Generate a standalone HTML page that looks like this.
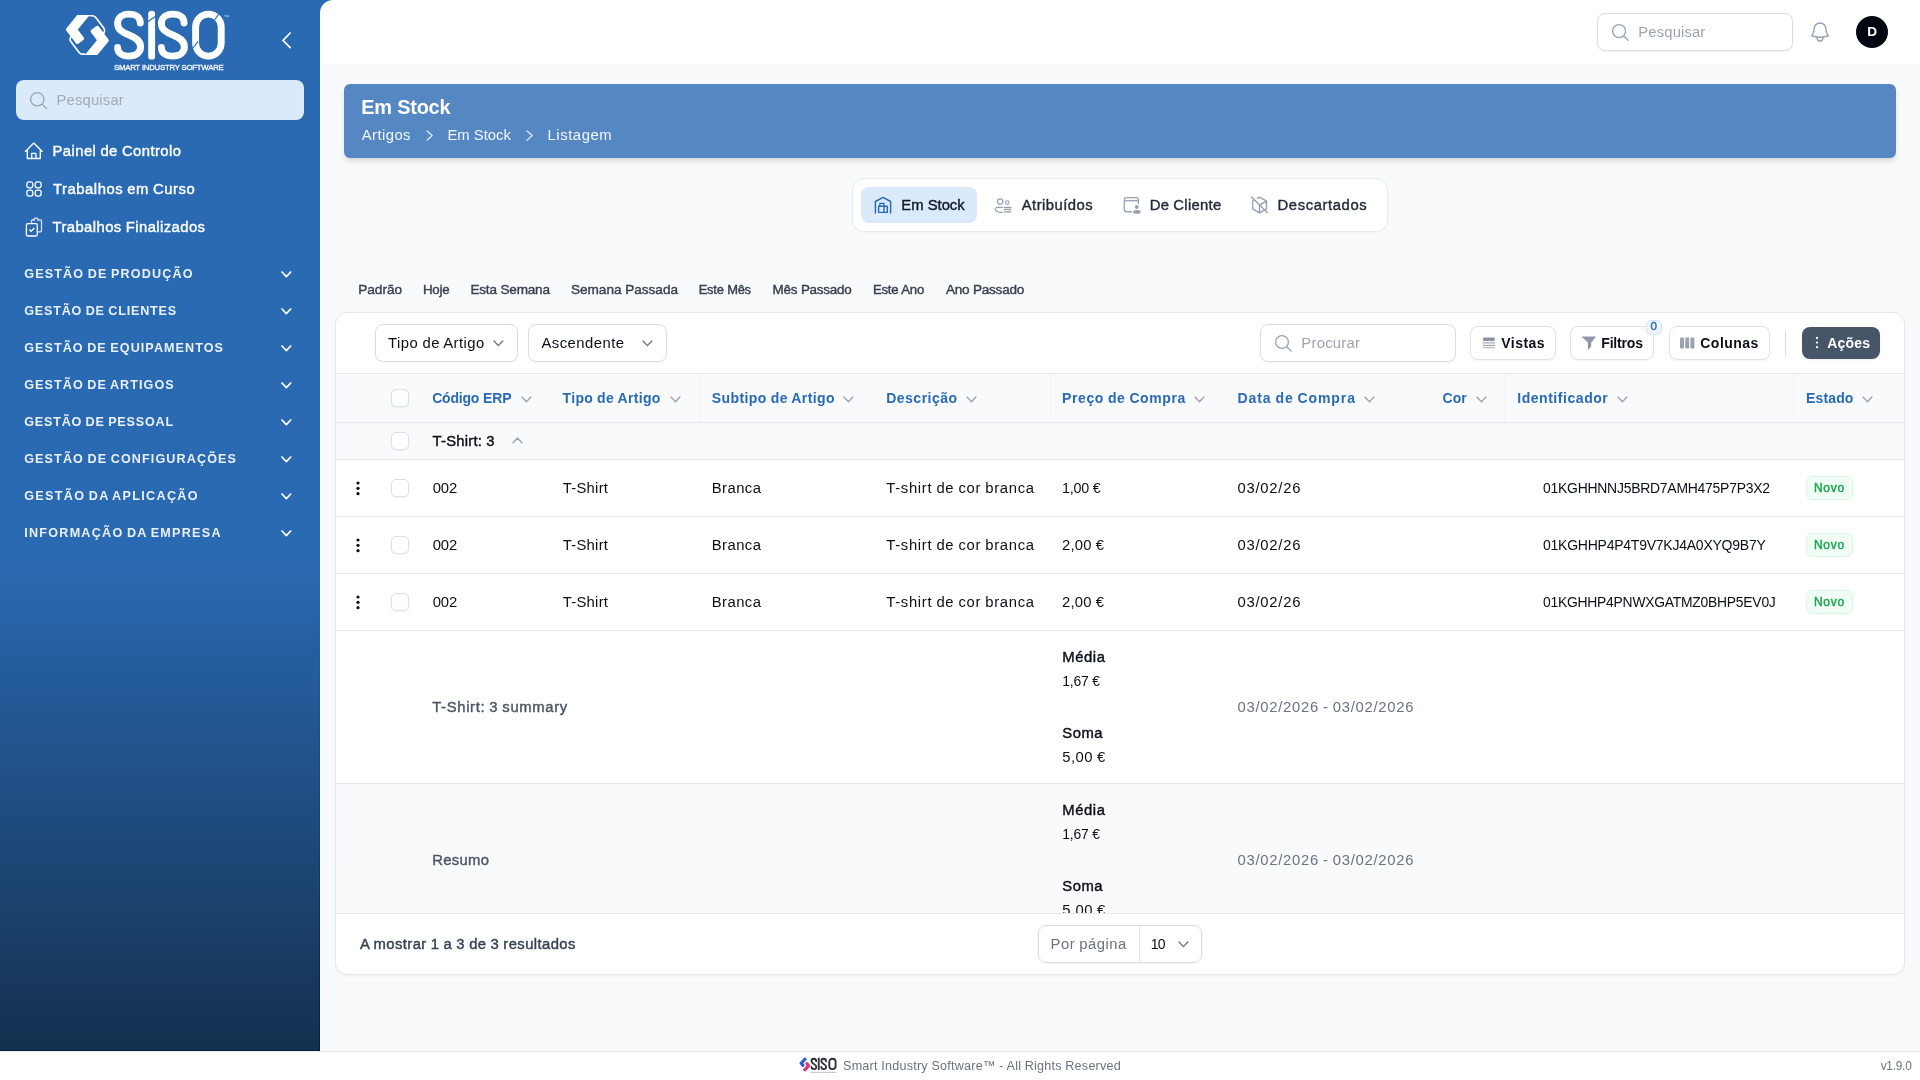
<!DOCTYPE html>
<html lang="pt"><head><meta charset="utf-8"><title>Em Stock - SISO</title>
<style>
*{box-sizing:border-box;margin:0;padding:0}
html,body{width:1920px;height:1080px;overflow:hidden;background:#f9fafb;font-family:"Liberation Sans", sans-serif;}
div,svg,span,a,h1,p,label,button,li,ul,nav,aside,header,main,footer,section{position:absolute;display:block;}
aside,header,main,footer,section,nav,ul,li{position:static;list-style:none}
.t{white-space:pre;}
svg{overflow:visible}
.field{background:#fff;border:1px solid #d9dce1;border-radius:8px;box-shadow:0 1px 2px rgba(0,0,0,.04)}
.btn{background:#fff;border:1px solid #dfe1e5;border-radius:8px;box-shadow:0 1px 2px rgba(0,0,0,.05)}
.cb{background:#fff;border:1px solid #dcdfe4;border-radius:5px;box-shadow:0 1px 2px rgba(0,0,0,.05)}
.hl{background:#e5e7eb;height:1px}
</style></head>
<body><div id="app" style="left:0;top:0;width:1920px;height:1080px;will-change:transform">
<aside>
<div style="left:0px;top:0px;width:336px;height:1051px;background:linear-gradient(180deg,#2a6ab3 0%,#2a6ab3 53%,#14304f 100%);border-bottom:1px solid #0a2247"></div>
<div style="left:320px;top:64px;width:16px;height:987px;background:#f9fafb"></div>
<div style="left:319px;top:0px;width:1px;height:1051px;background:linear-gradient(180deg,rgba(0,20,60,0) 55%,rgba(0,25,70,.18) 78%,rgba(0,15,50,.6) 100%)"></div>
<svg style="left:0;top:0" width="320" height="80" viewBox="0 0 320 80" fill="none">
<defs><clipPath id="lc"><rect x="60" y="14.9" width="60" height="40" rx="2"/></clipPath></defs>
<g clip-path="url(#lc)" fill="#fff" stroke="#fff" stroke-width="4" stroke-linejoin="round">
<path d="M87.20 5.99 L67.97 29.43 L77.48 41.97 L82.02 38.53 L75.23 29.57 L91.60 9.61Z"/>
<path d="M87.50 63.81 L106.73 40.37 L97.22 27.83 L92.68 31.27 L99.47 40.23 L83.10 60.19Z"/>
</g>
<path d="M90 15.75 H92.5 Q94.3 15.75 95.4 17.1 L103.9 28.2 Q105.3 30.2 104.2 32.2 L103.6 33.2" stroke="#fff" stroke-width="1.7" stroke-linecap="round" stroke-linejoin="round"/>
<path d="M84.7 54.05 H82.2 Q80.4 54.05 79.3 52.7 L70.8 41.6 Q69.4 39.6 70.5 37.6 L71.1 36.6" stroke="#fff" stroke-width="1.7" stroke-linecap="round" stroke-linejoin="round"/>
<g stroke="#fff" stroke-width="6.9" stroke-linecap="round" stroke-linejoin="round">
<path d="M140.3 23 C140.3 17.4 136 14.1 129 14.1 C122 14.1 117.6 17.8 117.6 23.4 C117.6 29.2 121.5 32 129 35 C136.5 38 140.6 41 140.6 46.8 C140.6 52.4 136 56.1 129 56.1 C122 56.1 117.6 52.8 117.6 47.4"/>
<path d="M184.1 23 C184.1 17.4 179.8 14.1 172.8 14.1 C165.8 14.1 161.4 17.8 161.4 23.4 C161.4 29.2 165.3 32 172.8 35 C180.3 38 184.4 41 184.4 46.8 C184.4 52.4 179.8 56.1 172.8 56.1 C165.8 56.1 161.4 52.8 161.4 47.4"/>
<rect x="195.6" y="14.1" width="25.6" height="42" rx="12.8"/>
</g>
<rect x="148.2" y="10.8" width="6.9" height="48.8" rx="3.2" fill="#fff"/>
<path d="M146.5 22.5 L156.5 15.8" stroke="#2a6ab3" stroke-width="1.3"/>
<path d="M214.6 20 L220 12.4 M192.6 48.5 L198.2 41.4" stroke="#2a6ab3" stroke-width="1.1"/>
<path d="M224.4 15.4 h1.7 M225.25 15.4 v1.8 M226.9 17.2 v-1.8 l0.8 1.1 l0.8 -1.1 v1.8" stroke="#fff" stroke-opacity=".85" stroke-width=".45"/>
</svg>
<span class="t" style="left:114px;top:62px;font-size:7.79px;line-height:11px;letter-spacing:-0.244px;color:rgba(255,255,255,.95);word-spacing:0.244px;-webkit-text-stroke:0.3px rgba(255,255,255,.95);">SMART INDUSTRY SOFTWARE</span>
<svg style="left:280.5px;top:30.7px;" width="11.2" height="18.6" viewBox="0 0 11.2 18.6" fill="none"><path d="M9.2 2 L2 9.3 L9.2 16.6" stroke="#fff" stroke-width="1.7" stroke-linecap="round" stroke-linejoin="round"/></svg>
<div style="left:16px;top:80px;width:288px;height:40px;background:#dbeafb;border-radius:8px"></div>
<svg style="left:27.5px;top:89.7px;" width="21.3" height="21.3" viewBox="0 0 24 24" fill="none"><path d="m21 21-5.197-5.197m0 0A7.5 7.5 0 1 0 5.196 5.196a7.5 7.5 0 0 0 10.607 10.607Z" stroke="#9ca3af" stroke-width="1.45" stroke-linecap="round" stroke-linejoin="round"/></svg>
<span class="t" style="left:56.5px;top:91px;font-size:14.84px;line-height:18px;letter-spacing:0.164px;color:#a3a9b5;">Pesquisar</span>
<nav><ul>
<li>
<svg style="left:24px;top:141px;" width="20" height="20" viewBox="0 0 20 20" fill="none"><path d="M1.4 10.4 L9.8 2 L18.2 10.4 M3.3 8.9 V17.5 H16.3 V8.9 M7.7 17.5 V12.3 H11.9 V17.5" stroke="#fff" stroke-width="1.35" stroke-linecap="round" stroke-linejoin="round"/></svg>
<a class="t" style="left:52.5px;top:142px;font-size:14.84px;line-height:18px;letter-spacing:0.433px;color:#fff;word-spacing:-0.433px;-webkit-text-stroke:0.4px #fff;">Painel de Controlo</a>
</li><li>
<svg style="left:26px;top:181px;" width="16" height="16" viewBox="0 0 16 16" fill="none"><rect x="0.9" y="0.9" width="5.9" height="5.9" rx="2.1" stroke="#fff" stroke-width="1.3"/><rect x="0.9" y="9.2" width="5.9" height="5.9" rx="2.1" stroke="#fff" stroke-width="1.3"/><rect x="9.2" y="0.9" width="5.9" height="5.9" rx="2.1" stroke="#fff" stroke-width="1.3"/><rect x="9.2" y="9.2" width="5.9" height="5.9" rx="2.1" stroke="#fff" stroke-width="1.3"/></svg>
<a class="t" style="left:53px;top:180px;font-size:14.84px;line-height:18px;letter-spacing:0.531px;color:#fff;word-spacing:-0.531px;-webkit-text-stroke:0.4px #fff;">Trabalhos em Curso</a>
</li><li>
<svg style="left:25px;top:217px;" width="18" height="20" viewBox="0 0 18 20" fill="none"><path d="M6.5 6.3 V4.2 Q6.5 2.9 7.8 2.9 H9.2 M13 2.9 H15.2 Q16.5 2.9 16.5 4.2 V13.6 Q16.5 14.9 15.2 14.9 H12.6 M9.2 3.6 V2.2 Q9.2 1.2 10.2 1.2 H12 Q13 1.2 13 2.2 V3.6" stroke="#fff" stroke-opacity=".85" stroke-width="1.2" stroke-linecap="round"/><rect x="1.4" y="6.6" width="10.9" height="12.4" rx="1.6" stroke="#fff" stroke-width="1.3"/><path d="M4.6 12.9 L6.1 14.4 L9 11.3" stroke="#fff" stroke-width="1.3" stroke-linecap="round" stroke-linejoin="round"/></svg>
<a class="t" style="left:52.5px;top:218px;font-size:14.84px;line-height:18px;letter-spacing:0.42px;color:#fff;word-spacing:-0.42px;-webkit-text-stroke:0.4px #fff;">Trabalhos Finalizados</a>
</li>
<li>
<span class="t" style="left:24.2px;top:266px;font-size:12.6px;line-height:16px;letter-spacing:1.144px;color:rgba(255,255,255,.9);word-spacing:-1.144px;font-weight:700;">GESTÃO DE PRODUÇÃO</span>
<svg style="left:279.55px;top:269.65px;" width="12.7" height="8.6" viewBox="0 0 12.7 8.6" fill="none"><path d="M2 2 L6.35 6.6 L10.7 2" stroke="#fff" stroke-width="1.7" stroke-linecap="round" stroke-linejoin="round"/></svg>
</li>
<li>
<span class="t" style="left:24.2px;top:303px;font-size:12.6px;line-height:16px;letter-spacing:0.803px;color:rgba(255,255,255,.9);word-spacing:-0.803px;font-weight:700;">GESTÃO DE CLIENTES</span>
<svg style="left:279.55px;top:306.65px;" width="12.7" height="8.6" viewBox="0 0 12.7 8.6" fill="none"><path d="M2 2 L6.35 6.6 L10.7 2" stroke="#fff" stroke-width="1.7" stroke-linecap="round" stroke-linejoin="round"/></svg>
</li>
<li>
<span class="t" style="left:24.2px;top:340px;font-size:12.6px;line-height:16px;letter-spacing:1.059px;color:rgba(255,255,255,.9);word-spacing:-1.059px;font-weight:700;">GESTÃO DE EQUIPAMENTOS</span>
<svg style="left:279.55px;top:343.65px;" width="12.7" height="8.6" viewBox="0 0 12.7 8.6" fill="none"><path d="M2 2 L6.35 6.6 L10.7 2" stroke="#fff" stroke-width="1.7" stroke-linecap="round" stroke-linejoin="round"/></svg>
</li>
<li>
<span class="t" style="left:24.2px;top:377px;font-size:12.6px;line-height:16px;letter-spacing:1.066px;color:rgba(255,255,255,.9);word-spacing:-1.066px;font-weight:700;">GESTÃO DE ARTIGOS</span>
<svg style="left:279.55px;top:380.65px;" width="12.7" height="8.6" viewBox="0 0 12.7 8.6" fill="none"><path d="M2 2 L6.35 6.6 L10.7 2" stroke="#fff" stroke-width="1.7" stroke-linecap="round" stroke-linejoin="round"/></svg>
</li>
<li>
<span class="t" style="left:24.2px;top:414px;font-size:12.6px;line-height:16px;letter-spacing:0.789px;color:rgba(255,255,255,.9);word-spacing:-0.789px;font-weight:700;">GESTÃO DE PESSOAL</span>
<svg style="left:279.55px;top:417.65px;" width="12.7" height="8.6" viewBox="0 0 12.7 8.6" fill="none"><path d="M2 2 L6.35 6.6 L10.7 2" stroke="#fff" stroke-width="1.7" stroke-linecap="round" stroke-linejoin="round"/></svg>
</li>
<li>
<span class="t" style="left:24.2px;top:451px;font-size:12.6px;line-height:16px;letter-spacing:1.109px;color:rgba(255,255,255,.9);word-spacing:-1.109px;font-weight:700;">GESTÃO DE CONFIGURAÇÕES</span>
<svg style="left:279.55px;top:454.65px;" width="12.7" height="8.6" viewBox="0 0 12.7 8.6" fill="none"><path d="M2 2 L6.35 6.6 L10.7 2" stroke="#fff" stroke-width="1.7" stroke-linecap="round" stroke-linejoin="round"/></svg>
</li>
<li>
<span class="t" style="left:24.2px;top:488px;font-size:12.6px;line-height:16px;letter-spacing:1.313px;color:rgba(255,255,255,.9);word-spacing:-1.313px;font-weight:700;">GESTÃO DA APLICAÇÃO</span>
<svg style="left:279.55px;top:491.65px;" width="12.7" height="8.6" viewBox="0 0 12.7 8.6" fill="none"><path d="M2 2 L6.35 6.6 L10.7 2" stroke="#fff" stroke-width="1.7" stroke-linecap="round" stroke-linejoin="round"/></svg>
</li>
<li>
<span class="t" style="left:24.2px;top:525px;font-size:12.6px;line-height:16px;letter-spacing:1.253px;color:rgba(255,255,255,.9);word-spacing:-1.253px;font-weight:700;">INFORMAÇÃO DA EMPRESA</span>
<svg style="left:279.55px;top:528.65px;" width="12.7" height="8.6" viewBox="0 0 12.7 8.6" fill="none"><path d="M2 2 L6.35 6.6 L10.7 2" stroke="#fff" stroke-width="1.7" stroke-linecap="round" stroke-linejoin="round"/></svg>
</li>
</ul></nav></aside>
<header>
<div style="left:320px;top:0px;width:1600px;height:64px;background:#fff;border-top-left-radius:13px"></div>
<div class="field" style="left:1597px;top:13px;width:196px;height:38px;"></div>
<svg style="left:1609.8px;top:22.2px;" width="20.8" height="20.8" viewBox="0 0 24 24" fill="none"><path d="m21 21-5.197-5.197m0 0A7.5 7.5 0 1 0 5.196 5.196a7.5 7.5 0 0 0 10.607 10.607Z" stroke="#94a3b8" stroke-width="1.5" stroke-linecap="round" stroke-linejoin="round"/></svg>
<span class="t" style="left:1638.3px;top:23px;font-size:14.84px;line-height:18px;letter-spacing:0.133px;color:#9ca3b4;">Pesquisar</span>
<svg style="left:1807.8px;top:19.6px;" width="24" height="24" viewBox="0 0 24 24" fill="none"><path d="M14.857 17.082a23.848 23.848 0 0 0 5.454-1.31A8.967 8.967 0 0 1 18 9.75V9A6 6 0 0 0 6 9v.75a8.967 8.967 0 0 1-2.312 6.022c1.733.64 3.56 1.085 5.455 1.31m5.714 0a24.255 24.255 0 0 1-5.714 0m5.714 0a3 3 0 1 1-5.714 0" stroke="#94a3b8" stroke-width="1.45" stroke-linecap="round" stroke-linejoin="round"/></svg>
<div style="left:1856px;top:16px;width:32px;height:32px;background:#030712;border-radius:50%"></div>
<span class="t" style="left:1867.3px;top:23px;font-size:13.6px;line-height:17px;letter-spacing:0px;color:#fff;font-weight:700;">D</span>
</header>
<main>
<div style="left:344px;top:84px;width:1552px;height:73.6px;background:#5588c3;border-radius:6px;box-shadow:0 4px 6px -1px rgba(0,0,0,.12),0 2px 4px -2px rgba(0,0,0,.1)"></div>
<h1 class="t" style="left:361.3px;top:95px;font-size:19.9px;line-height:24px;letter-spacing:-0.243px;color:#fff;word-spacing:0.243px;font-weight:700;">Em Stock</h1>
<span class="t" style="left:361.7px;top:126px;font-size:14.84px;line-height:18px;letter-spacing:0.441px;color:rgba(255,255,255,.92);">Artigos</span>
<svg style="left:425.4px;top:128.6px;" width="9.2" height="13.2" viewBox="0 0 9.2 13.2" fill="none"><path d="M2 2 L7.2 6.6 L2 11.2" stroke="#fff" stroke-opacity="0.8" stroke-width="1.3" stroke-linecap="round" stroke-linejoin="round"/></svg>
<span class="t" style="left:447.5px;top:126px;font-size:14.84px;line-height:18px;letter-spacing:-0.026px;color:rgba(255,255,255,.92);word-spacing:0.026px;">Em Stock</span>
<svg style="left:525.4px;top:128.6px;" width="9.2" height="13.2" viewBox="0 0 9.2 13.2" fill="none"><path d="M2 2 L7.2 6.6 L2 11.2" stroke="#fff" stroke-opacity="0.8" stroke-width="1.3" stroke-linecap="round" stroke-linejoin="round"/></svg>
<span class="t" style="left:547.5px;top:126px;font-size:14.84px;line-height:18px;letter-spacing:0.575px;color:rgba(255,255,255,.92);">Listagem</span>
<div style="left:852px;top:178px;width:536px;height:54px;background:#fff;border:1px solid #e8eaed;border-radius:12px;box-shadow:0 1px 2px rgba(0,0,0,.03)"></div>
<div style="left:861px;top:187px;width:116px;height:36px;background:#dbeafb;border-radius:8px"></div>
<svg style="left:873px;top:196px;" width="20" height="18" viewBox="0 0 20 18" fill="none"><path d="M2.4 17 V5.5 L10.1 1.4 L17.6 5.5 V17" stroke="#2a6ab3" stroke-width="1.45" stroke-linecap="round" stroke-linejoin="round"/><path d="M5.6 16.4 V10.3 H14.3 V16.4 Z M6.9 10.3 V7.4 H11 V10.3 M11 10.3 V16.4" stroke="#2a6ab3" stroke-width="1.4" stroke-linejoin="round"/></svg>
<svg style="left:994px;top:197px;" width="19" height="17" viewBox="0 0 19 17" fill="none"><circle cx="6.2" cy="4.6" r="2.7" stroke="#98a1b1" stroke-width="1.25"/><circle cx="13.3" cy="5.5" r="1.8" stroke="#98a1b1" stroke-width="1.15"/><path d="M8.6 10.4 H3.6 Q1.3 10.4 1.4 12.3 Q1.7 15.1 6.4 15.4 H8.4" stroke="#98a1b1" stroke-width="1.25" stroke-linecap="round"/><path d="M9.9 10.5 H17.4 M9.9 12.7 H17.4 M9.9 14.9 H17.4" stroke="#98a1b1" stroke-width="1.3"/></svg>
<svg style="left:1123px;top:196px;" width="19" height="19" viewBox="0 0 19 19" fill="none"><path d="M15.4 7.6 V3.9 Q15.4 1.6 13.1 1.6 H3.6 Q1.3 1.6 1.3 3.9 V13.4 Q1.3 15.7 3.6 15.7 H8.6" stroke="#98a1b1" stroke-width="1.35" stroke-linecap="round"/><path d="M1.3 4.7 H15.4" stroke="#98a1b1" stroke-width="1.3"/><circle cx="13.8" cy="11" r="1.9" fill="#98a1b1"/><path d="M10.2 16.4 Q10.2 14 13.9 14 Q17.6 14 17.6 16.4 Q17.6 17.8 13.9 17.8 Q10.2 17.8 10.2 16.4Z" fill="#98a1b1"/></svg>
<svg style="left:1250px;top:195px;" width="19" height="19" viewBox="0 0 19 19" fill="none"><path d="M9.5 2.2 L16.5 6.2 V13.9 L9.5 17.9 L2.6 13.9 V6.2 L4.6 5 M9.5 17.9 V10.1 L16.5 6.2 M7.3 3.4 L9.5 2.2" stroke="#98a1b1" stroke-width="1.4" stroke-linejoin="round" stroke-linecap="round"/><path d="M1.5 1.9 L17.3 17.5" stroke="#98a1b1" stroke-width="1.45" stroke-linecap="round"/></svg>
<span class="t" style="left:901.3px;top:196px;font-size:14.84px;line-height:18px;letter-spacing:-0.009px;color:#111827;word-spacing:0.009px;-webkit-text-stroke:0.4px #111827;">Em Stock</span>
<span class="t" style="left:1021.7px;top:196px;font-size:14.84px;line-height:18px;letter-spacing:0.47px;color:#1f2937;-webkit-text-stroke:0.4px #1f2937;">Atribuídos</span>
<span class="t" style="left:1149.7px;top:196px;font-size:14.84px;line-height:18px;letter-spacing:0.283px;color:#1f2937;word-spacing:-0.283px;-webkit-text-stroke:0.4px #1f2937;">De Cliente</span>
<span class="t" style="left:1277.5px;top:196px;font-size:14.84px;line-height:18px;letter-spacing:0.595px;color:#1f2937;-webkit-text-stroke:0.4px #1f2937;">Descartados</span>
<a class="t" style="left:358.3px;top:281px;font-size:13.57px;line-height:17px;letter-spacing:-0.007px;color:#374151;-webkit-text-stroke:0.4px #374151;">Padrão</a>
<a class="t" style="left:423px;top:281px;font-size:13.3px;line-height:17px;letter-spacing:-0.253px;color:#374151;-webkit-text-stroke:0.4px #374151;">Hoje</a>
<a class="t" style="left:470.4px;top:281px;font-size:13.57px;line-height:17px;letter-spacing:-0.202px;color:#374151;word-spacing:0.202px;-webkit-text-stroke:0.4px #374151;">Esta Semana</a>
<a class="t" style="left:571px;top:281px;font-size:13.57px;line-height:17px;letter-spacing:-0.007px;color:#374151;word-spacing:0.007px;-webkit-text-stroke:0.4px #374151;">Semana Passada</a>
<a class="t" style="left:698.75px;top:281px;font-size:12.9px;line-height:17px;letter-spacing:-0.247px;color:#374151;word-spacing:0.247px;-webkit-text-stroke:0.4px #374151;">Este Mês</a>
<a class="t" style="left:772.5px;top:281px;font-size:13.45px;line-height:17px;letter-spacing:-0.247px;color:#374151;word-spacing:0.247px;-webkit-text-stroke:0.4px #374151;">Mês Passado</a>
<a class="t" style="left:873px;top:281px;font-size:13.17px;line-height:17px;letter-spacing:-0.245px;color:#374151;word-spacing:0.245px;-webkit-text-stroke:0.4px #374151;">Este Ano</a>
<a class="t" style="left:946px;top:281px;font-size:13.53px;line-height:17px;letter-spacing:-0.245px;color:#374151;word-spacing:0.245px;-webkit-text-stroke:0.4px #374151;">Ano Passado</a>
<section>
<div style="left:335px;top:312px;width:1570px;height:663px;background:#fff;border:1px solid #e7e8eb;border-radius:12px;box-shadow:0 1px 2px rgba(0,0,0,.04)"></div>
<div class="field" style="left:375px;top:324px;width:143px;height:38px;"></div>
<span class="t" style="left:388.1px;top:334px;font-size:14.84px;line-height:18px;letter-spacing:0.477px;color:#0b0f19;word-spacing:-0.477px;">Tipo de Artigo</span>
<svg style="left:492.1px;top:339.0px;" width="12.8" height="8.6" viewBox="0 0 12.8 8.6" fill="none"><path d="M2 2 L6.4 6.6 L10.8 2" stroke="#6b7280" stroke-width="1.35" stroke-linecap="round" stroke-linejoin="round"/></svg>
<div class="field" style="left:528px;top:324px;width:139px;height:38px;"></div>
<span class="t" style="left:541.5px;top:334px;font-size:14.84px;line-height:18px;letter-spacing:0.464px;color:#0b0f19;">Ascendente</span>
<svg style="left:640.9px;top:339.0px;" width="12.8" height="8.6" viewBox="0 0 12.8 8.6" fill="none"><path d="M2 2 L6.4 6.6 L10.8 2" stroke="#6b7280" stroke-width="1.35" stroke-linecap="round" stroke-linejoin="round"/></svg>
<div class="field" style="left:1260px;top:324px;width:196px;height:38px;"></div>
<svg style="left:1272.8px;top:333.4px;" width="20.6" height="20.6" viewBox="0 0 24 24" fill="none"><path d="m21 21-5.197-5.197m0 0A7.5 7.5 0 1 0 5.196 5.196a7.5 7.5 0 0 0 10.607 10.607Z" stroke="#94a3b8" stroke-width="1.5" stroke-linecap="round" stroke-linejoin="round"/></svg>
<span class="t" style="left:1301.3px;top:334px;font-size:14.84px;line-height:18px;letter-spacing:0.263px;color:#9ca3b4;">Procurar</span>
<div class="btn" style="left:1470px;top:326px;width:86px;height:34px;"></div>
<svg style="left:1482px;top:336px;" width="14" height="14" viewBox="0 0 14 14" fill="none"><rect x="1" y="1.4" width="11.8" height="3.5" rx="1.2" fill="#8a92a3"/><path d="M1.2 6.9 H12.6 M1.2 9.3 H12.6 M1.2 11.7 H12.6" stroke="#a3aab8" stroke-width="1.15" stroke-linecap="round"/></svg>
<span class="t" style="left:1501.3px;top:334px;font-size:14.0px;line-height:18px;letter-spacing:0.44px;color:#0b0f19;font-weight:700;">Vistas</span>
<div class="btn" style="left:1570px;top:326px;width:84px;height:34px;"></div>
<svg style="left:1581px;top:335px;" width="16" height="16" viewBox="0 0 16 16" fill="none"><path d="M1.3 1.4 H14.5 Q15 1.4 14.8 2 L10.2 7.6 V11.6 L7.6 14.6 Q7 15.2 6.9 14.4 V7.6 L1 2 Q0.8 1.4 1.3 1.4Z" fill="#8f97a6"/></svg>
<span class="t" style="left:1601.25px;top:334px;font-size:14.0px;line-height:18px;letter-spacing:-0.172px;color:#0b0f19;font-weight:700;">Filtros</span>
<div style="left:1645.5px;top:319.5px;width:16.4px;height:15px;background:#eff5fc;border:1px solid #d5e3f3;border-radius:5px"></div>
<span class="t" style="left:1650.4px;top:319px;font-size:11.6px;line-height:14px;letter-spacing:0px;color:#2a6ab3;-webkit-text-stroke:0.4px #2a6ab3;">0</span>
<div class="btn" style="left:1669px;top:326px;width:101px;height:34px;"></div>
<svg style="left:1679px;top:336px;" width="17" height="14" viewBox="0 0 17 14" fill="none"><rect x="1" y="1.6" width="4" height="11" rx="1.3" fill="#9aa1af"/><rect x="6.2" y="1.6" width="4" height="11" rx="1" fill="#9aa1af"/><rect x="11.4" y="1.6" width="4" height="11" rx="1.3" fill="#9aa1af"/></svg>
<span class="t" style="left:1700.25px;top:334px;font-size:14.0px;line-height:18px;letter-spacing:0.486px;color:#0b0f19;font-weight:700;">Colunas</span>
<div style="left:1785px;top:331px;width:1px;height:24px;background:#d5d8dd"></div>
<div style="left:1802px;top:327px;width:78px;height:32px;background:#475569;border-radius:8px;box-shadow:0 1px 2px rgba(0,0,0,.08)"></div>
<svg style="left:1812.5px;top:334.4px;" width="8" height="17.2" viewBox="0 0 8 17.2" fill="none"><circle cx="4" cy="4.0" r="1.15" fill="#fff"/><circle cx="4" cy="8.6" r="1.15" fill="#fff"/><circle cx="4" cy="13.2" r="1.15" fill="#fff"/></svg>
<span class="t" style="left:1827.2px;top:334px;font-size:14.0px;line-height:18px;letter-spacing:0.192px;color:#fff;font-weight:700;">Ações</span>
<div style="left:336px;top:373px;width:1568px;height:541px;overflow:hidden">
<div style="left:0px;top:0px;width:1568px;height:50px;background:#f9fafb;border-top:1px solid #e5e7eb;border-bottom:1px solid #e5e7eb"></div>
<div class="cb" style="left:55px;top:16px;width:18px;height:18px;"></div>
<span class="t" style="left:96.2px;top:16px;font-size:14.0px;line-height:18px;letter-spacing:-0.199px;color:#2a6ab3;word-spacing:0.199px;font-weight:700;">Código ERP</span>
<svg style="left:183.55px;top:21.55px;" width="12.9" height="8.7" viewBox="0 0 12.9 8.7" fill="none"><path d="M2 2 L6.45 6.7 L10.9 2" stroke="#9ca3af" stroke-width="1.35" stroke-linecap="round" stroke-linejoin="round"/></svg>
<span class="t" style="left:226.5px;top:16px;font-size:14.0px;line-height:18px;letter-spacing:0.345px;color:#2a6ab3;word-spacing:-0.345px;font-weight:700;">Tipo de Artigo</span>
<svg style="left:332.55px;top:21.55px;" width="12.9" height="8.7" viewBox="0 0 12.9 8.7" fill="none"><path d="M2 2 L6.45 6.7 L10.9 2" stroke="#9ca3af" stroke-width="1.35" stroke-linecap="round" stroke-linejoin="round"/></svg>
<span class="t" style="left:375.7px;top:16px;font-size:14.0px;line-height:18px;letter-spacing:0.427px;color:#2a6ab3;word-spacing:-0.427px;font-weight:700;">Subtipo de Artigo</span>
<svg style="left:506.3px;top:21.55px;" width="12.9" height="8.7" viewBox="0 0 12.9 8.7" fill="none"><path d="M2 2 L6.45 6.7 L10.9 2" stroke="#9ca3af" stroke-width="1.35" stroke-linecap="round" stroke-linejoin="round"/></svg>
<span class="t" style="left:550.25px;top:16px;font-size:14.0px;line-height:18px;letter-spacing:0.477px;color:#2a6ab3;font-weight:700;">Descrição</span>
<svg style="left:628.8px;top:21.55px;" width="12.9" height="8.7" viewBox="0 0 12.9 8.7" fill="none"><path d="M2 2 L6.45 6.7 L10.9 2" stroke="#9ca3af" stroke-width="1.35" stroke-linecap="round" stroke-linejoin="round"/></svg>
<span class="t" style="left:726px;top:16px;font-size:14.0px;line-height:18px;letter-spacing:0.622px;color:#2a6ab3;word-spacing:-0.622px;font-weight:700;">Preço de Compra</span>
<svg style="left:856.55px;top:21.55px;" width="12.9" height="8.7" viewBox="0 0 12.9 8.7" fill="none"><path d="M2 2 L6.45 6.7 L10.9 2" stroke="#9ca3af" stroke-width="1.35" stroke-linecap="round" stroke-linejoin="round"/></svg>
<span class="t" style="left:901.5px;top:16px;font-size:14.0px;line-height:18px;letter-spacing:0.922px;color:#2a6ab3;word-spacing:-0.922px;font-weight:700;">Data de Compra</span>
<svg style="left:1026.55px;top:21.55px;" width="12.9" height="8.7" viewBox="0 0 12.9 8.7" fill="none"><path d="M2 2 L6.45 6.7 L10.9 2" stroke="#9ca3af" stroke-width="1.35" stroke-linecap="round" stroke-linejoin="round"/></svg>
<span class="t" style="left:1106.5px;top:16px;font-size:14.0px;line-height:18px;letter-spacing:0.038px;color:#2a6ab3;font-weight:700;">Cor</span>
<svg style="left:1138.85px;top:21.55px;" width="12.9" height="8.7" viewBox="0 0 12.9 8.7" fill="none"><path d="M2 2 L6.45 6.7 L10.9 2" stroke="#9ca3af" stroke-width="1.35" stroke-linecap="round" stroke-linejoin="round"/></svg>
<span class="t" style="left:1181.2px;top:16px;font-size:14.0px;line-height:18px;letter-spacing:0.549px;color:#2a6ab3;font-weight:700;">Identificador</span>
<svg style="left:1279.55px;top:21.55px;" width="12.9" height="8.7" viewBox="0 0 12.9 8.7" fill="none"><path d="M2 2 L6.45 6.7 L10.9 2" stroke="#9ca3af" stroke-width="1.35" stroke-linecap="round" stroke-linejoin="round"/></svg>
<span class="t" style="left:1470px;top:16px;font-size:14.0px;line-height:18px;letter-spacing:0.143px;color:#2a6ab3;font-weight:700;">Estado</span>
<svg style="left:1525.35px;top:21.55px;" width="12.9" height="8.7" viewBox="0 0 12.9 8.7" fill="none"><path d="M2 2 L6.45 6.7 L10.9 2" stroke="#9ca3af" stroke-width="1.35" stroke-linecap="round" stroke-linejoin="round"/></svg>
<div style="left:362.5px;top:1px;width:1px;height:48px;background:rgba(0,0,0,.025)"></div>
<div style="left:713.5px;top:1px;width:1px;height:48px;background:rgba(0,0,0,.025)"></div>
<div style="left:1168px;top:1px;width:1px;height:48px;background:rgba(0,0,0,.025)"></div>
<div style="left:1457px;top:1px;width:1px;height:48px;background:rgba(0,0,0,.025)"></div>
<div style="left:0px;top:50px;width:1568px;height:37px;background:#f9fafb;border-bottom:1px solid #e5e7eb"></div>
<div class="cb" style="left:55px;top:59px;width:18px;height:18px;"></div>
<span class="t" style="left:96.6px;top:59px;font-size:14.84px;line-height:18px;letter-spacing:0.23px;color:#0b0f19;word-spacing:-0.23px;-webkit-text-stroke:0.4px #0b0f19;">T-Shirt: 3</span>
<svg style="left:175.35px;top:63.25px;" width="12.9" height="8.7" viewBox="0 0 12.9 8.7" fill="none"><path d="M2 6.7 L6.45 2 L10.9 6.7" stroke="#9ca3af" stroke-width="1.35" stroke-linecap="round" stroke-linejoin="round"/></svg>
<div style="left:0px;top:87px;width:1568px;height:57px;background:#fff;border-bottom:1px solid #e5e7eb"></div>
<svg style="left:18.0px;top:105.85px;" width="8" height="18.7" viewBox="0 0 8 18.7" fill="none"><circle cx="4" cy="4.0" r="1.6" fill="#0b0f19"/><circle cx="4" cy="9.35" r="1.6" fill="#0b0f19"/><circle cx="4" cy="14.7" r="1.6" fill="#0b0f19"/></svg>
<div class="cb" style="left:55px;top:106px;width:18px;height:18px;"></div>
<span class="t" style="left:96.7px;top:106px;font-size:14.84px;line-height:18px;letter-spacing:-0.125px;color:#0b0f19;">002</span>
<span class="t" style="left:226.7px;top:106px;font-size:14.84px;line-height:18px;letter-spacing:0.271px;color:#0b0f19;">T-Shirt</span>
<span class="t" style="left:375.7px;top:106px;font-size:14.84px;line-height:18px;letter-spacing:0.463px;color:#0b0f19;">Branca</span>
<span class="t" style="left:550.25px;top:106px;font-size:14.84px;line-height:18px;letter-spacing:0.692px;color:#0b0f19;word-spacing:-0.692px;">T-shirt de cor branca</span>
<span class="t" style="left:726px;top:106px;font-size:14.32px;line-height:18px;letter-spacing:-0.249px;color:#0b0f19;word-spacing:0.249px;">1,00 €</span>
<span class="t" style="left:901.5px;top:106px;font-size:14.84px;line-height:18px;letter-spacing:0.738px;color:#0b0f19;">03/02/26</span>
<span class="t" style="left:1207px;top:106px;font-size:13.94px;line-height:18px;letter-spacing:-0.247px;color:#0b0f19;">01KGHHNNJ5BRD7AMH475P7P3X2</span>
<div style="left:1469.5px;top:103px;width:47px;height:24px;background:#f0fdf4;border:1px solid #dcf5e4;border-radius:6px"></div>
<span class="t" style="left:1477.9px;top:107px;font-size:12.0px;line-height:16px;letter-spacing:0.728px;color:#16a34a;-webkit-text-stroke:0.4px #16a34a;">Novo</span>
<div style="left:0px;top:144px;width:1568px;height:57px;background:#fff;border-bottom:1px solid #e5e7eb"></div>
<svg style="left:18.0px;top:162.85px;" width="8" height="18.7" viewBox="0 0 8 18.7" fill="none"><circle cx="4" cy="4.0" r="1.6" fill="#0b0f19"/><circle cx="4" cy="9.35" r="1.6" fill="#0b0f19"/><circle cx="4" cy="14.7" r="1.6" fill="#0b0f19"/></svg>
<div class="cb" style="left:55px;top:163px;width:18px;height:18px;"></div>
<span class="t" style="left:96.7px;top:163px;font-size:14.84px;line-height:18px;letter-spacing:-0.125px;color:#0b0f19;">002</span>
<span class="t" style="left:226.7px;top:163px;font-size:14.84px;line-height:18px;letter-spacing:0.271px;color:#0b0f19;">T-Shirt</span>
<span class="t" style="left:375.7px;top:163px;font-size:14.84px;line-height:18px;letter-spacing:0.463px;color:#0b0f19;">Branca</span>
<span class="t" style="left:550.25px;top:163px;font-size:14.84px;line-height:18px;letter-spacing:0.692px;color:#0b0f19;word-spacing:-0.692px;">T-shirt de cor branca</span>
<span class="t" style="left:726px;top:163px;font-size:14.84px;line-height:18px;letter-spacing:0.191px;color:#0b0f19;word-spacing:-0.191px;">2,00 €</span>
<span class="t" style="left:901.5px;top:163px;font-size:14.84px;line-height:18px;letter-spacing:0.738px;color:#0b0f19;">03/02/26</span>
<span class="t" style="left:1207px;top:163px;font-size:14.0px;line-height:18px;letter-spacing:-0.24px;color:#0b0f19;">01KGHHP4P4T9V7KJ4A0XYQ9B7Y</span>
<div style="left:1469.5px;top:160px;width:47px;height:24px;background:#f0fdf4;border:1px solid #dcf5e4;border-radius:6px"></div>
<span class="t" style="left:1477.9px;top:164px;font-size:12.0px;line-height:16px;letter-spacing:0.728px;color:#16a34a;-webkit-text-stroke:0.4px #16a34a;">Novo</span>
<div style="left:0px;top:201px;width:1568px;height:57px;background:#fff;border-bottom:1px solid #e5e7eb"></div>
<svg style="left:18.0px;top:219.85px;" width="8" height="18.7" viewBox="0 0 8 18.7" fill="none"><circle cx="4" cy="4.0" r="1.6" fill="#0b0f19"/><circle cx="4" cy="9.35" r="1.6" fill="#0b0f19"/><circle cx="4" cy="14.7" r="1.6" fill="#0b0f19"/></svg>
<div class="cb" style="left:55px;top:220px;width:18px;height:18px;"></div>
<span class="t" style="left:96.7px;top:220px;font-size:14.84px;line-height:18px;letter-spacing:-0.125px;color:#0b0f19;">002</span>
<span class="t" style="left:226.7px;top:220px;font-size:14.84px;line-height:18px;letter-spacing:0.271px;color:#0b0f19;">T-Shirt</span>
<span class="t" style="left:375.7px;top:220px;font-size:14.84px;line-height:18px;letter-spacing:0.463px;color:#0b0f19;">Branca</span>
<span class="t" style="left:550.25px;top:220px;font-size:14.84px;line-height:18px;letter-spacing:0.692px;color:#0b0f19;word-spacing:-0.692px;">T-shirt de cor branca</span>
<span class="t" style="left:726px;top:220px;font-size:14.84px;line-height:18px;letter-spacing:0.191px;color:#0b0f19;word-spacing:-0.191px;">2,00 €</span>
<span class="t" style="left:901.5px;top:220px;font-size:14.84px;line-height:18px;letter-spacing:0.738px;color:#0b0f19;">03/02/26</span>
<span class="t" style="left:1207px;top:220px;font-size:13.89px;line-height:18px;letter-spacing:-0.239px;color:#0b0f19;">01KGHHP4PNWXGATMZ0BHP5EV0J</span>
<div style="left:1469.5px;top:217px;width:47px;height:24px;background:#f0fdf4;border:1px solid #dcf5e4;border-radius:6px"></div>
<span class="t" style="left:1477.9px;top:221px;font-size:12.0px;line-height:16px;letter-spacing:0.728px;color:#16a34a;-webkit-text-stroke:0.4px #16a34a;">Novo</span>
<div style="left:0px;top:257.5px;width:1568px;height:153px;background:#fff;border-bottom:1px solid #e5e7eb"></div>
<span class="t" style="left:96.2px;top:325px;font-size:14.84px;line-height:18px;letter-spacing:0.657px;color:#4b5563;word-spacing:-0.657px;-webkit-text-stroke:0.4px #4b5563;">T-Shirt: 3 summary</span>
<span class="t" style="left:726.3px;top:275px;font-size:14.84px;line-height:18px;letter-spacing:0.577px;color:#0b0f19;-webkit-text-stroke:0.4px #0b0f19;">Média</span>
<span class="t" style="left:726.3px;top:299px;font-size:13.93px;line-height:18px;letter-spacing:-0.255px;color:#0b0f19;word-spacing:0.255px;">1,67 €</span>
<span class="t" style="left:726.3px;top:351px;font-size:14.84px;line-height:18px;letter-spacing:0.483px;color:#0b0f19;-webkit-text-stroke:0.4px #0b0f19;">Soma</span>
<span class="t" style="left:726.3px;top:375px;font-size:14.84px;line-height:18px;letter-spacing:0.416px;color:#0b0f19;word-spacing:-0.416px;">5,00 €</span>
<span class="t" style="left:901.5px;top:325px;font-size:14.84px;line-height:18px;letter-spacing:0.72px;color:#6b7280;word-spacing:-0.72px;">03/02/2026 - 03/02/2026</span>
<div style="left:0px;top:410.5px;width:1568px;height:153px;background:#f9fafb;border-bottom:1px solid #e5e7eb"></div>
<span class="t" style="left:96.2px;top:478px;font-size:14.84px;line-height:18px;letter-spacing:0.316px;color:#4b5563;-webkit-text-stroke:0.4px #4b5563;">Resumo</span>
<span class="t" style="left:726.3px;top:428px;font-size:14.84px;line-height:18px;letter-spacing:0.577px;color:#0b0f19;-webkit-text-stroke:0.4px #0b0f19;">Média</span>
<span class="t" style="left:726.3px;top:452px;font-size:13.93px;line-height:18px;letter-spacing:-0.255px;color:#0b0f19;word-spacing:0.255px;">1,67 €</span>
<span class="t" style="left:726.3px;top:504px;font-size:14.84px;line-height:18px;letter-spacing:0.483px;color:#0b0f19;-webkit-text-stroke:0.4px #0b0f19;">Soma</span>
<span class="t" style="left:726.3px;top:528px;font-size:14.84px;line-height:18px;letter-spacing:0.416px;color:#0b0f19;word-spacing:-0.416px;">5,00 €</span>
<span class="t" style="left:901.5px;top:478px;font-size:14.84px;line-height:18px;letter-spacing:0.72px;color:#6b7280;word-spacing:-0.72px;">03/02/2026 - 03/02/2026</span>
</div>
<div style="left:336px;top:913px;width:1568px;height:1px;background:#e5e7eb"></div>
<span class="t" style="left:360px;top:935px;font-size:14.84px;line-height:18px;letter-spacing:0.406px;color:#374151;word-spacing:-0.406px;-webkit-text-stroke:0.4px #374151;">A mostrar 1 a 3 de 3 resultados</span>
<div class="field" style="left:1038px;top:925px;width:164px;height:38px;"></div>
<div style="left:1139px;top:926px;width:1px;height:36px;background:#e5e7eb"></div>
<span class="t" style="left:1050.6px;top:935px;font-size:14.84px;line-height:18px;letter-spacing:0.489px;color:#6b7280;word-spacing:-0.489px;">Por página</span>
<span class="t" style="left:1150.8px;top:935px;font-size:14.0px;line-height:18px;letter-spacing:0px;color:#0b0f19;letter-spacing:-0.8px;">10</span>
<svg style="left:1176.6px;top:940.0px;" width="12.8" height="8.6" viewBox="0 0 12.8 8.6" fill="none"><path d="M2 2 L6.4 6.6 L10.8 2" stroke="#6b7280" stroke-width="1.35" stroke-linecap="round" stroke-linejoin="round"/></svg>
</section>
</main>
<footer>
<div style="left:0px;top:1051px;width:1920px;height:29px;background:#fff;border-top:1px solid #e5e7eb"></div>
<svg style="left:800px;top:1057px" width="38" height="17" viewBox="0 0 38 17" fill="none">
<g transform="translate(4.9 7.5) scale(0.232) translate(-87.35 -34.9)" stroke-width="8" stroke-linejoin="round">
<path d="M87.20 9 L67.97 29.43 L77.48 41.97 L82.02 38.53 L75.23 29.57 L91.60 12Z" fill="#2c5ed4" stroke="#2c5ed4"/>
<path d="M87.50 60.8 L106.73 40.37 L97.22 27.83 L92.68 31.27 L99.47 40.23 L83.10 57.8Z" fill="#e0357c" stroke="#e0357c"/>
</g>
<g stroke="#2f3138" stroke-width="1.85" stroke-linecap="round" fill="none">
<path d="M16.2 4.2 C16.2 2.4 15.2 1.7 13.85 1.7 C12.4 1.7 11.5 2.6 11.5 4.1 C11.5 5.8 12.6 6.4 13.85 7 C15.2 7.7 16.3 8.3 16.3 10 C16.3 11.5 15.2 12.1 13.85 12.1 C12.4 12.1 11.5 11.4 11.5 9.8"/>
<path d="M18.75 1.5 V12.3"/>
<path d="M26 4.2 C26 2.4 25 1.7 23.65 1.7 C22.2 1.7 21.3 2.6 21.3 4.1 C21.3 5.8 22.4 6.4 23.65 7 C25 7.7 26.1 8.3 26.1 10 C26.1 11.5 25 12.1 23.65 12.1 C22.2 12.1 21.3 11.4 21.3 9.8"/>
<rect x="29.3" y="1.7" width="6.3" height="10.4" rx="3.1"/>
</g>
<path d="M11 15.3 H36.4" stroke="#8d9098" stroke-width=".8" stroke-dasharray="1.4 .5"/>
</svg>
<span class="t" style="left:843px;top:1058px;font-size:12.6px;line-height:16px;letter-spacing:0.232px;color:#6b7280;word-spacing:-0.232px;">Smart Industry Software™ - All Rights Reserved</span>
<span class="t" style="left:1880.7px;top:1058px;font-size:11.88px;line-height:16px;letter-spacing:-0.252px;color:#6b7280;">v1.9.0</span>
</footer>
</div></body></html>
